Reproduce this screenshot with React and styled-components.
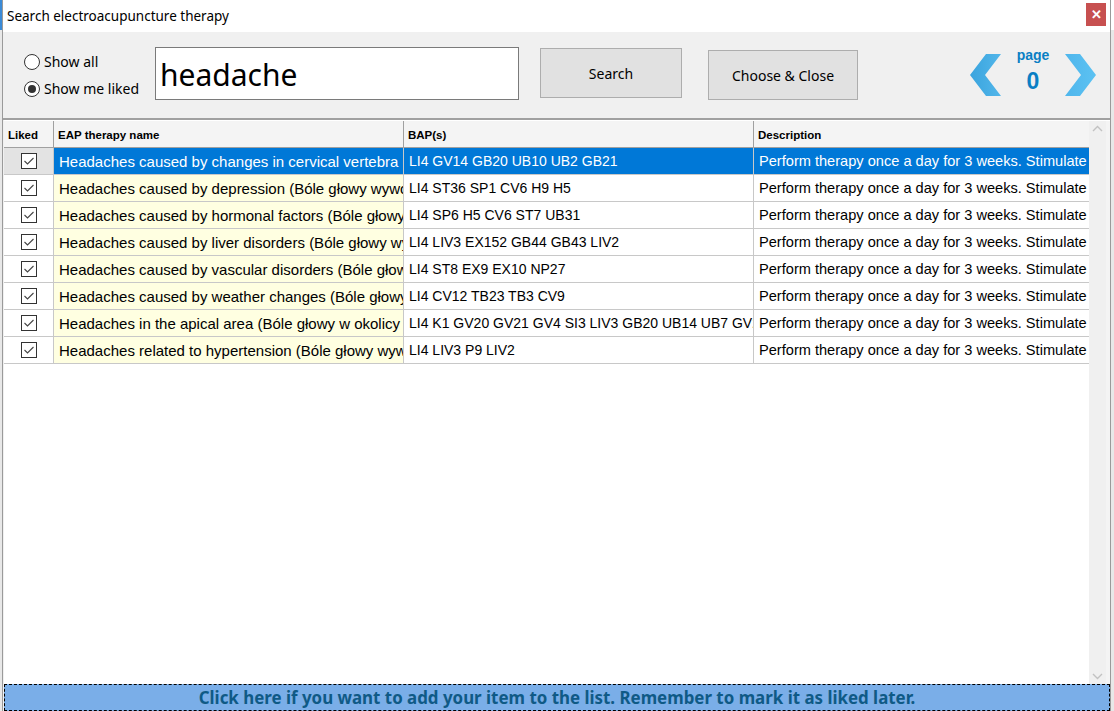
import React, { useState } from "react";
import styled, { createGlobalStyle } from "styled-components";

const GlobalStyle = createGlobalStyle`
  html, body {
    margin: 0;
    padding: 0;
    background: #f0f0f0;
    overflow: hidden;
  }
  * {
    box-sizing: border-box;
  }
`;

const Screen = styled.div`
  display: flex;
  width: 1114px;
  height: 711px;
  font-family: "Noto Sans", "Liberation Sans", sans-serif;
`;

const Edge = styled.div`
  width: ${({ w }) => w}px;
  height: 100%;
  background: linear-gradient(
    to bottom,
    ${({ top }) => top} 0,
    ${({ top }) => top} 30px,
    #e8e8e8 30px
  );
  border-${({ side }) => side}: 1px solid #9a9a9a;
`;

const Window = styled.div`
  width: 1107px;
  height: 711px;
  display: flex;
  flex-direction: column;
  background: #f0f0f0;
`;

const TitleBar = styled.div`
  height: 32px;
  background: #ffffff;
  display: flex;
  align-items: flex-start;
  justify-content: space-between;
  padding: 5px 4px 0 4px;
`;

const Title = styled.div`
  font-size: 13.5px;
  color: #000;
  line-height: 22px;
`;

const CloseBtn = styled.div`
  width: 20px;
  height: 23px;
  margin-top: -2px;
  background: #c75050;
  color: #fff;
  font-family: "Liberation Sans", sans-serif;
  font-weight: bold;
  font-size: 13px;
  display: flex;
  align-items: center;
  justify-content: center;
`;

const Toolbar = styled.div`
  height: 88px;
  display: flex;
  align-items: center;
  padding-left: 21px;
  padding-bottom: 2px;
  border-bottom: 2px solid #a0a0a0;
`;

const RadioGroup = styled.div`
  display: flex;
  flex-direction: column;
  gap: 8px;
  width: 131px;
  margin-top: 2px;
`;

const RadioRow = styled.label`
  display: flex;
  align-items: center;
  gap: 4px;
  font-size: 14px;
  color: #000;
  height: 19px;
`;

const RadioDot = styled.span`
  width: 16px;
  height: 16px;
  border-radius: 50%;
  border: 1px solid #333;
  background: #fff;
  display: flex;
  align-items: center;
  justify-content: center;

  &::after {
    content: "";
    width: 8px;
    height: 8px;
    border-radius: 50%;
    background: ${({ on }) => (on ? "#333" : "transparent")};
  }
`;

const SearchInput = styled.div`
  width: 364px;
  height: 53px;
  margin-top: -1px;
  background: #fff;
  border: 1px solid #7a7a7a;
  font-size: 30px;
  padding-left: 4px;
  line-height: 54px;
  color: #000;
`;

const Button = styled.div`
  width: ${({ w }) => w}px;
  height: 50px;
  margin-left: ${({ ml }) => ml}px;
  margin-top: ${({ mt }) => mt}px;
  background: #e1e1e1;
  border: 1px solid #adadad;
  display: flex;
  align-items: center;
  justify-content: center;
  font-size: 14px;
  color: #000;
`;

const Pager = styled.div`
  margin-left: 110px;
  margin-top: 2px;
  display: flex;
  align-items: center;
  gap: 14px;
`;

const PageLabel = styled.div`
  align-self: flex-start;
  margin-top: -6px;
  display: flex;
  flex-direction: column;
  align-items: center;
  font-family: "Liberation Sans", sans-serif;
  font-weight: bold;
  color: #0a7fc4;
  width: 34px;

  span:first-child {
    font-size: 14px;
    line-height: 16px;
  }
  span:last-child {
    font-size: 23px;
    line-height: 26px;
    margin-top: 5px;
  }
`;

const Body = styled.div`
  flex: 1;
  display: flex;
  background: #fff;
  margin-left: 1px;
  padding-top: 1px;
  min-height: 0;
`;

const Table = styled.div`
  flex: 1;
  display: flex;
  flex-direction: column;
`;

const COLS = "50px 350px 350px 1fr";

const HeadRow = styled.div`
  display: grid;
  grid-template-columns: ${COLS};
  height: 27px;
  background: #f4f4f4;
  border-bottom: 1px solid #a0a0a0;
`;

const HeadCell = styled.div`
  font-family: "Liberation Sans", sans-serif;
  font-weight: bold;
  font-size: 11.5px;
  color: #000;
  display: flex;
  align-items: center;
  padding-left: 4px;
  padding-top: 1px;
  border-right: 1px solid #a0a0a0;
  &:last-child {
    border-right: none;
  }
`;

const Row = styled.div`
  display: grid;
  grid-template-columns: ${COLS};
  height: 27px;
  border-bottom: 1px solid #c8c8c8;
`;

const Cell = styled.div`
  display: flex;
  align-items: center;
  padding-left: 5px;
  font-size: ${({ size }) => size}px;
  font-family: "Liberation Sans", sans-serif;
  white-space: nowrap;
  overflow: hidden;
  border-right: 1px solid #c8c8c8;
  color: ${({ sel }) => (sel ? "#fff" : "#000")};
  background: ${({ sel, bg }) => (sel ? "#0078d7" : bg || "#fff")};
  &:last-child {
    border-right: none;
  }
`;

const CheckCell = styled.div`
  display: flex;
  align-items: center;
  justify-content: center;
  padding-left: 1px;
  border-right: 1px solid #c8c8c8;
  background: ${({ sel }) => (sel ? "#e3e3e3" : "#fff")};
`;

const Box = styled.span`
  width: 16px;
  height: 16px;
  border: 1px solid #333;
  background: #fff;
  display: flex;
  align-items: center;
  justify-content: center;
`;

const Scrollbar = styled.div`
  width: 17px;
  background: #f0f0f0;
  display: flex;
  flex-direction: column;
  justify-content: space-between;
  align-items: center;
  padding: 4px 0;
  border-right: 4px solid #f4f4f4;
  box-sizing: content-box;
`;

const AddBar = styled.div`
  height: 27px;
  margin-left: 1px;
  background: #7aaee8;
  border: 1px dashed #000;
  display: flex;
  align-items: center;
  justify-content: center;
  font-family: "Noto Sans", "Liberation Sans", sans-serif;
  font-weight: bold;
  font-size: 16.9px;
  color: #0f5a86;
`;

const Chevron = ({ dir }) => (
  <svg width="34" height="44" viewBox="0 0 34 44">
    <defs>
      <linearGradient id={"g" + dir} x1="0" y1="0" x2="1" y2="0">
        <stop offset="0" stopColor={dir === "l" ? "#3aa4de" : "#4fb6ec"} />
        <stop offset="1" stopColor={dir === "l" ? "#52b6ea" : "#5cc2f2"} />
      </linearGradient>
    </defs>
    {dir === "l" ? (
      <polygon points="18,1 33,1 17,22 33,43 18,43 2,22" fill="url(#gl)" />
    ) : (
      <polygon points="1,1 16,1 32,22 16,43 1,43 17,22" fill="url(#gr)" />
    )}
  </svg>
);

const Check = () => (
  <svg width="12" height="10" viewBox="0 0 12 10">
    <polyline
      points="1.5,5 4.5,8 10.5,2"
      fill="none"
      stroke="#444"
      strokeWidth="1.1"
    />
  </svg>
);

const Arrow = ({ up }) => (
  <svg width="11" height="7" viewBox="0 0 11 7">
    <polyline
      points={up ? "1,6 5.5,1.5 10,6" : "1,1 5.5,5.5 10,1"}
      fill="none"
      stroke="#c2c2c2"
      strokeWidth="1.4"
    />
  </svg>
);

const rows = [
  [
    "Headaches caused by changes in cervical vertebra (Bóle głowy wywołane zmianami w kręgosłupie szyjnym)",
    "LI4 GV14 GB20 UB10 UB2 GB21",
  ],
  [
    "Headaches caused by depression (Bóle głowy wywołane depresją)",
    "LI4 ST36 SP1 CV6 H9 H5",
  ],
  [
    "Headaches caused by hormonal factors (Bóle głowy wywołane czynnikami hormonalnymi)",
    "LI4 SP6 H5 CV6 ST7 UB31",
  ],
  [
    "Headaches caused by liver disorders (Bóle głowy wywołane zaburzeniami wątroby)",
    "LI4 LIV3 EX152 GB44 GB43 LIV2",
  ],
  [
    "Headaches caused by vascular disorders (Bóle głowy wywołane zaburzeniami naczyniowymi)",
    "LI4 ST8 EX9 EX10 NP27",
  ],
  [
    "Headaches caused by weather changes (Bóle głowy wywołane zmianami pogody)",
    "LI4 CV12 TB23 TB3 CV9",
  ],
  [
    "Headaches in the apical area (Bóle głowy w okolicy szczytowej)",
    "LI4 K1 GV20 GV21 GV4 SI3 LIV3 GB20 UB14 UB7 GV23",
  ],
  [
    "Headaches related to hypertension (Bóle głowy wywołane nadciśnieniem)",
    "LI4 LIV3 P9 LIV2",
  ],
];

const DESC =
  "Perform therapy once a day for 3 weeks. Stimulate each point for 1 minute.";

const App = () => {
  const [selected] = useState(0);

  return (
    <>
      <GlobalStyle />
      <Screen>
        <Edge w={3} top="#3b8ad6" side="right" />
        <Window>
          <TitleBar>
            <Title>Search electroacupuncture therapy</Title>
            <CloseBtn>✕</CloseBtn>
          </TitleBar>
          <Toolbar>
            <RadioGroup>
              <RadioRow>
                <RadioDot />
                Show all
              </RadioRow>
              <RadioRow>
                <RadioDot on />
                Show me liked
              </RadioRow>
            </RadioGroup>
            <SearchInput>headache</SearchInput>
            <Button w={142} ml={21} mt={-2}>
              Search
            </Button>
            <Button w={150} ml={26} mt={2}>
              Choose &amp; Close
            </Button>
            <Pager>
              <Chevron dir="l" />
              <PageLabel>
                <span>page</span>
                <span>0</span>
              </PageLabel>
              <Chevron dir="r" />
            </Pager>
          </Toolbar>
          <Body>
            <Table>
              <HeadRow>
                <HeadCell>Liked</HeadCell>
                <HeadCell>EAP therapy name</HeadCell>
                <HeadCell>BAP(s)</HeadCell>
                <HeadCell>Description</HeadCell>
              </HeadRow>
              {rows.map(([name, bap], i) => {
                const sel = i === selected;
                return (
                  <Row key={name}>
                    <CheckCell sel={sel}>
                      <Box>
                        <Check />
                      </Box>
                    </CheckCell>
                    <Cell sel={sel} bg="#ffffe1" size={15}>
                      {name}
                    </Cell>
                    <Cell sel={sel} size={14}>
                      {bap}
                    </Cell>
                    <Cell sel={sel} size={14.6}>
                      {DESC}
                    </Cell>
                  </Row>
                );
              })}
            </Table>
            <Scrollbar>
              <Arrow up />
              <Arrow />
            </Scrollbar>
          </Body>
          <AddBar>
            Click here if you want to add your item to the list. Remember to
            mark it as liked later.
          </AddBar>
        </Window>
        <Edge w={4} top="#ffffff" side="left" />
      </Screen>
    </>
  );
};

export default App;
